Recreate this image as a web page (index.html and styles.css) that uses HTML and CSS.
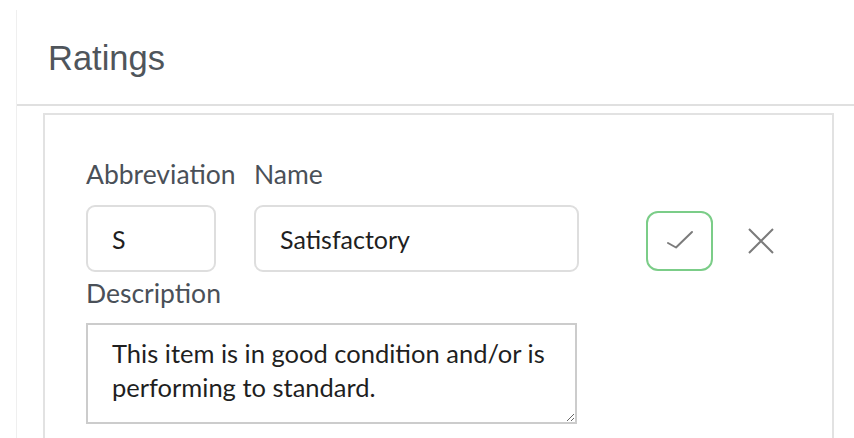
FILE: index.html
```html
<!DOCTYPE html>
<html>
<head>
<meta charset="utf-8">
<link rel="stylesheet" href="styles.css">
</head>
<body>
<div class="panel">
  <div class="panel-header">
    <h2 class="title">Ratings</h2>
  </div>
  <div class="panel-body">
    <div class="rating-card">
      <div class="row">
        <div class="field field-abbr">
          <label class="label">Abbreviation</label>
          <input class="input input-abbr" type="text" value="S">
        </div>
        <div class="field">
          <label class="label">Name</label>
          <input class="input input-name" type="text" value="Satisfactory">
        </div>
        <div class="actions">
          <button class="btn-check" type="button" aria-label="Save">
            <svg width="67" height="60" viewBox="0 0 67 60"><polyline points="22,32 30,36.5 46,21" fill="none" stroke="#7b7b7b" stroke-width="2" stroke-linecap="round" stroke-linejoin="round"/></svg>
          </button>
          <button class="btn-close" type="button" aria-label="Cancel">
            <svg width="26" height="26" viewBox="0 0 26 26"><path d="M1 1 L25 25 M25 1 L1 25" fill="none" stroke="#7b7b7b" stroke-width="2"/></svg>
          </button>
        </div>
      </div>
      <div class="desc-field">
        <label class="label">Description</label>
        <textarea class="textarea">This item is in good condition and/or is performing to standard.</textarea>
      </div>
    </div>
  </div>
</div>
</body>
</html>
```

FILE: styles.css
```css
html, body {
  margin: 0;
  padding: 0;
  background: #ffffff;
  height: 438px;
  overflow: hidden;
}

body {
  font-family: "Lato", "Open Sans", sans-serif;
}

.panel {
  margin-top: 10px;
  margin-left: 16px;
  border-left: 1px solid #efefef;
  height: 600px;
}

.panel-header {
  padding: 28px 0 26px 31px;
  border-bottom: 2px solid #e0e0e0;
}

.title {
  margin: 0;
  font-family: "Liberation Sans", Arial, sans-serif;
  font-weight: normal;
  font-size: 34.5px;
  line-height: 40px;
  color: #4f555b;
}

.panel-body {
  padding: 7px 20px 0 26px;
}

.rating-card {
  border: 2px solid #e2e2e2;
  padding: 45px 0 40px 41px;
  height: 500px;
}

.row {
  display: flex;
  align-items: flex-end;
}

.field {
  display: flex;
  flex-direction: column;
}

.field-abbr {
  width: 168px;
  flex: none;
}

.label {
  font-size: 26.5px;
  line-height: 29px;
  color: #4a5058;
  margin-bottom: 16px;
  white-space: nowrap;
}

.input {
  box-sizing: border-box;
  height: 67px;
  border: 2px solid #dedede;
  border-radius: 9px;
  padding: 0 0 0 24px;
  font-family: "Lato", sans-serif;
  font-size: 25px;
  color: #1f1f1f;
  outline: none;
  background: #fff;
}

.input-abbr {
  width: 130px;
}

.input-name {
  width: 325px;
}

.actions {
  display: flex;
  align-items: center;
  gap: 35px;
  margin-left: 67px;
  height: 67px;
}

.btn-check {
  box-sizing: border-box;
  width: 67px;
  height: 60px;
  margin-top: 5px;
  padding: 0;
  border: 2px solid #7bcd88;
  border-radius: 12px;
  background: #fff;
  display: flex;
  align-items: center;
  justify-content: center;
}

.btn-check svg {
  display: block;
  margin: -2px;
}

.btn-close {
  width: 26px;
  height: 26px;
  margin-top: 4px;
  padding: 0;
  border: none;
  background: transparent;
}

.btn-close svg {
  display: block;
}

.desc-field {
  display: flex;
  flex-direction: column;
  margin-top: 7px;
}

.desc-field .label {
  margin-bottom: 15px;
}

.textarea {
  box-sizing: border-box;
  width: 491px;
  height: 101px;
  border: 2px solid #cccccc;
  border-radius: 0;
  padding: 11px 20px 0 24px;
  font-family: "Lato", sans-serif;
  font-size: 25.5px;
  line-height: 34px;
  color: #1f1f1f;
  outline: none;
  resize: vertical;
}
```
